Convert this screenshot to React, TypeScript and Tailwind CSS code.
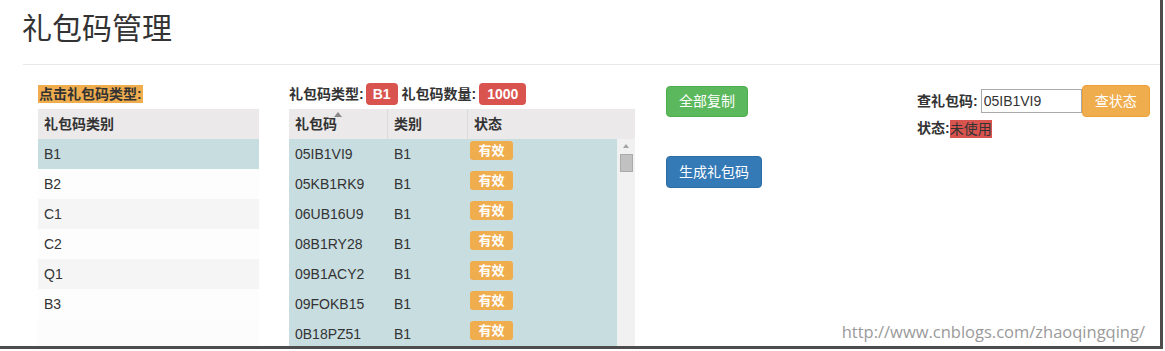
import React from "react";

const FONT = { fontFamily: '"Liberation Sans", Arial, "Noto Sans CJK SC", sans-serif' };

const types = ["B1", "B2", "C1", "C2", "Q1", "B3"];

const codes = [
  "05IB1VI9",
  "05KB1RK9",
  "06UB16U9",
  "08B1RY28",
  "09B1ACY2",
  "09FOKB15",
  "0B18PZ51",
];

const TypeTable = () => {
  return (
    <div className="w-[221px]">
      <div className="h-[30px] bg-[#ebe9e9] flex items-center px-[6px] font-bold text-[14px] text-[#333]">
        礼包码类别
      </div>
      {types.map((t, i) => (
        <div
          key={t}
          className={`h-[30px] flex items-center px-[6px] text-[14px] text-[#333] ${
            i === 0 ? "bg-[#c8dde0]" : i % 2 === 0 ? "bg-[#f5f5f5]" : "bg-[#fdfdfd]"
          }`}
        >
          {t}
        </div>
      ))}
      <div className="h-[30px] bg-[#fcfcfc]" />
    </div>
  );
};

const CodeTable = () => {
  return (
    <div className="w-[346px]">
      {/* header */}
      <div className="h-[30px] bg-[#ebe9e9] flex text-[14px] font-bold text-[#333]">
        <div className="relative w-[99px] flex items-center px-[6px] border-r border-[#dcdcdc]">
          礼包码
          {/* sort caret */}
          <div className="absolute left-[45px] top-[3px] w-0 h-0 border-l-[4px] border-r-[4px] border-b-[5px] border-l-transparent border-r-transparent border-b-[#888]" />
        </div>
        <div className="w-[80px] flex items-center px-[6px] border-r border-[#dcdcdc]">类别</div>
        <div className="flex-1 flex items-center px-[6px]">状态</div>
      </div>
      {/* body + scrollbar */}
      <div className="flex">
        <div className="w-[328px] bg-[#c8dde0]">
          {codes.map((c) => (
            <div key={c} className="h-[30px] flex text-[14px] text-[#333]">
              <div className="w-[99px] flex items-center px-[6px]">{c}</div>
              <div className="w-[80px] flex items-center px-[6px]">B1</div>
              <div className="flex-1 flex items-start pt-[2px] pl-[2px]">
                <span className="flex items-center justify-center w-[43px] h-[19px] rounded-[3px] bg-[#f0ad4e] text-white text-[13px] leading-[19px] font-bold">
                  有效
                </span>
              </div>
            </div>
          ))}
        </div>
        <div className="w-[18px] bg-[#f1f1f1] flex flex-col items-center pt-[5px]">
          <div className="w-0 h-0 border-l-[3px] border-r-[3px] border-b-[4px] border-l-transparent border-r-transparent border-b-[#a3a3a3]" />
          <div className="mt-[6px] w-[13px] h-[18px] bg-[#c1c1c1] border border-[#aaa]" />
        </div>
      </div>
    </div>
  );
};

const App = () => {
  return (
    <div className="relative w-[1165px] h-[351px] bg-white overflow-hidden" style={FONT}>
      <div className="w-[1163px] h-[349px] border-r-[3px] border-b-[3px] border-[#4d4d4d] overflow-hidden">
        <h1 className="pl-[22px] pt-[12px] text-[30px] leading-[34px] text-[#333]">礼包码管理</h1>
        <div className="ml-[23px] mt-[18px] border-t border-[#e8e8e8]" />

        <div className="flex pt-[18px] pl-[38px]">
          {/* left column */}
          <div className="flex flex-col">
            <div className="h-[22px] flex items-center">
              <span className="bg-[#f0ad4e] text-[14px] leading-[18px] font-bold text-[#333] px-[1px]">
                点击礼包码类型:
              </span>
            </div>
            <div className="mt-[4px]">
              <TypeTable />
            </div>
          </div>

          {/* middle column */}
          <div className="ml-[30px] flex flex-col">
            <div className="h-[22px] flex items-center text-[14px] font-bold text-[#333]">
              <span>礼包码类型:</span>
              <span className="ml-[2px] h-[22px] px-[7px] flex items-center rounded-[4px] bg-[#d9534f] text-white">
                B1
              </span>
              <span className="ml-[4px]">礼包码数量:</span>
              <span className="ml-[3px] h-[22px] px-[8px] flex items-center rounded-[4px] bg-[#d9534f] text-white">
                1000
              </span>
            </div>
            <div className="mt-[4px]">
              <CodeTable />
            </div>
          </div>

          {/* buttons column */}
          <div className="ml-[31px] pt-[3px] flex flex-col items-start">
            <button className="h-[31px] px-[12px] rounded-[4px] bg-[#5cb85c] border border-[#4cae4c] text-white text-[14px]">
              全部复制
            </button>
            <button className="mt-[39px] h-[32px] px-[12px] rounded-[4px] bg-[#337ab7] border border-[#2e6da4] text-white text-[14px]">
              生成礼包码
            </button>
          </div>

          {/* right column */}
          <div className="ml-[155px] pt-[2px] flex flex-col">
            <div className="flex items-center">
              <span className="text-[14px] font-bold text-[#333]">查礼包码:</span>
              <input
                readOnly
                value="05IB1VI9"
                className="ml-[3px] w-[101px] h-[24px] border border-[#a9a9a9] px-[2px] text-[14px] text-[#333] outline-none"
                style={FONT}
              />
              <button className="h-[32px] px-[12px] rounded-[4px] bg-[#f0ad4e] border border-[#eea236] text-white text-[14px]">
                查状态
              </button>
            </div>
            <div className="mt-[1px] flex items-center text-[14px] font-bold text-[#333]">
              <span>状态:</span>
              <span className="bg-[#d9534f] font-normal text-[#333] leading-[18px]">未使用</span>
            </div>
          </div>
        </div>
      </div>

      <div
        className="absolute right-[20px] bottom-[6px] text-[16.5px] text-[#9a9a9a]"
        style={{ fontFamily: '"Open Sans", "Noto Sans", sans-serif' }}
      >
        http://www.cnblogs.com/zhaoqingqing/
      </div>
    </div>
  );
};

export default App;
